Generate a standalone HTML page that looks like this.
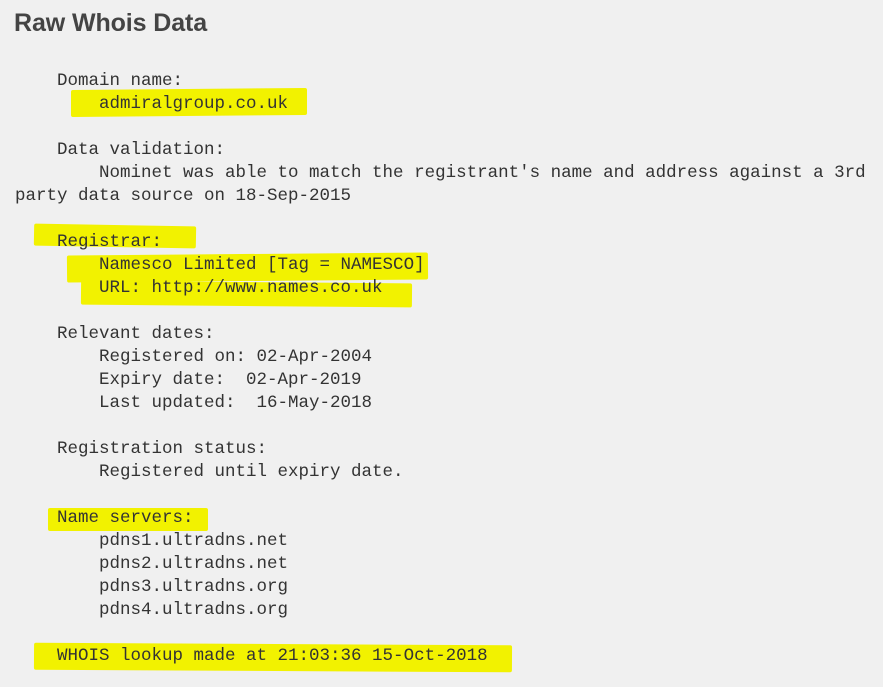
<!DOCTYPE html>
<html><head><style>
body{margin:0;width:883px;height:687px;background:#f0f0f0;position:relative;overflow:hidden}
h1{position:absolute;left:14px;top:9px;margin:0;font:bold 25px "Liberation Sans",sans-serif;color:#444;letter-spacing:-0.1px}
.h{position:absolute;background:#f2f200;border-radius:2px}
pre{position:absolute;left:15px;top:70px;margin:0;font:17.5px/23px "Liberation Mono",monospace;color:#333}
</style></head><body>
<h1>Raw Whois Data</h1>
<div class="h" style="left:71px;top:89px;width:236px;height:27px;transform:skewY(-0.5deg)"></div>
<div class="h" style="left:34px;top:225px;width:162px;height:22px;transform:rotate(1deg)"></div>
<div class="h" style="left:67px;top:254px;width:361px;height:27px;transform:rotate(-0.5deg)"></div>
<div class="h" style="left:81px;top:282px;width:331px;height:24px;transform:rotate(0.5deg)"></div>
<div class="h" style="left:48px;top:508px;width:160px;height:23px"></div>
<div class="h" style="left:34px;top:644px;width:478px;height:27px;transform:rotate(0.3deg)"></div>
<pre>    Domain name:
        admiralgroup.co.uk

    Data validation:
        Nominet was able to match the registrant's name and address against a 3rd
party data source on 18-Sep-2015

    Registrar:
        Namesco Limited [Tag = NAMESCO]
        URL: http://www.names.co.uk

    Relevant dates:
        Registered on: 02-Apr-2004
        Expiry date:  02-Apr-2019
        Last updated:  16-May-2018

    Registration status:
        Registered until expiry date.

    Name servers:
        pdns1.ultradns.net
        pdns2.ultradns.net
        pdns3.ultradns.org
        pdns4.ultradns.org

    WHOIS lookup made at 21:03:36 15-Oct-2018</pre>
</body></html>
